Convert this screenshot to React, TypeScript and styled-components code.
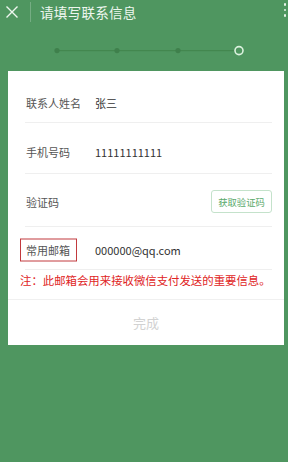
import styled, { createGlobalStyle } from 'styled-components';

const GlobalStyle = createGlobalStyle`
  html, body { margin: 0; padding: 0; }
  body {
    background: #4f9660;
    font-family: "Noto Sans CJK SC", "Noto Sans", sans-serif;
  }
`;

const Page = styled.div`
  width: 288px;
  height: 462px;
  background: #4f9660;
  overflow: hidden;
`;

const TopBar = styled.div`
  height: 24px;
  display: flex;
  align-items: center;
  position: relative;
`;

const CloseBtn = styled.div`
  width: 24px;
  height: 24px;
  display: flex;
  align-items: center;
  justify-content: center;
`;

const BarDivider = styled.div`
  width: 1px;
  height: 20px;
  margin-left: 6px;
  background: rgba(255, 255, 255, 0.22);
`;

const Title = styled.div`
  margin-left: 9px;
  font-size: 13.6px;
  color: #eef6ef;
  letter-spacing: 0.2px;
`;

const MoreDots = styled.div`
  position: absolute;
  right: 2px;
  top: 3px;
  display: flex;
  flex-direction: column;
  gap: 3px;
  span {
    width: 2.5px;
    height: 2.5px;
    border-radius: 50%;
    background: #e6f2e8;
  }
`;

const Stepper = styled.div`
  height: 47px;
  display: flex;
  justify-content: center;
`;

const Card = styled.div`
  margin-left: 8px;
  margin-right: 4px;
  background: #fff;
  padding-top: 2px;
`;

const Rows = styled.div`
  padding: 0 12px 0 17px;
`;

const Row = styled.div<{ $h: number; $pt: number }>`
  height: ${(p) => p.$h}px;
  box-sizing: border-box;
  padding-top: ${(p) => p.$pt}px;
  display: flex;
  align-items: center;
  border-bottom: 1px solid #efefef;
  font-size: 11px;
`;

const Label = styled.div<{ $marked?: boolean }>`
  width: 69px;
  padding-left: 1px;
  color: #555;
  flex-shrink: 0;
  position: relative;
  &::after {
    content: '';
    display: ${(p) => (p.$marked ? 'block' : 'none')};
    position: absolute;
    left: -5px;
    top: 50%;
    transform: translateY(-50%);
    width: 55px;
    height: 21px;
    border: 1.5px solid #c23a3e;
  }
`;

const Value = styled.div`
  color: #333;
  flex: 1;
`;

const CodeButton = styled.div`
  width: 59px;
  height: 21px;
  border: 1px solid #c4e2cb;
  border-radius: 3px;
  color: #5aa96b;
  font-size: 9.3px;
  display: flex;
  align-items: center;
  justify-content: center;
`;

const Note = styled.div`
  padding: 1px 0 10px 12px;
  font-size: 11.4px;
  line-height: 18px;
  color: #e02424;
  border-bottom: 1px solid #f0f0f0;
  white-space: nowrap;
`;

const Footer = styled.div`
  height: 45px;
  display: flex;
  align-items: center;
  justify-content: center;
  font-size: 13px;
  color: #d2d2d2;
`;

const StepLine = () => (
  <svg width="288" height="47" viewBox="0 0 288 47">
    <line x1="57" y1="26.6" x2="234" y2="26.6" stroke="#43874f" strokeWidth="1.2" />
    {[57, 117, 178].map((x) => (
      <circle key={x} cx={x} cy="26.6" r="2.6" fill="#3f804c" />
    ))}
    <circle cx="239" cy="26.6" r="4" fill="none" stroke="#dcf2df" strokeWidth="1.6" />
  </svg>
);

export default function App() {
  return (
    <Page>
      <GlobalStyle />
      <TopBar>
        <CloseBtn>
          <svg width="14" height="14" viewBox="0 0 14 14">
            <path d="M1.5 1.5 L12.5 12.5 M12.5 1.5 L1.5 12.5" stroke="#eef6ef" strokeWidth="1.4" />
          </svg>
        </CloseBtn>
        <BarDivider />
        <Title>请填写联系信息</Title>
        <MoreDots>
          <span />
          <span />
          <span />
        </MoreDots>
      </TopBar>
      <Stepper>
        <StepLine />
      </Stepper>
      <Card>
        <Rows>
          <Row $h={50} $pt={10}>
            <Label>联系人姓名</Label>
            <Value>张三</Value>
          </Row>
          <Row $h={51} $pt={7}>
            <Label>手机号码</Label>
            <Value>11111111111</Value>
          </Row>
          <Row $h={53} $pt={3}>
            <Label>验证码</Label>
            <Value />
            <CodeButton>获取验证码</CodeButton>
          </Row>
          <Row $h={43} $pt={3}>
            <Label $marked>常用邮箱</Label>
            <Value>000000@qq.com</Value>
          </Row>
        </Rows>
        <Note>注：此邮箱会用来接收微信支付发送的重要信息。</Note>
        <Footer>完成</Footer>
      </Card>
    </Page>
  );
}
